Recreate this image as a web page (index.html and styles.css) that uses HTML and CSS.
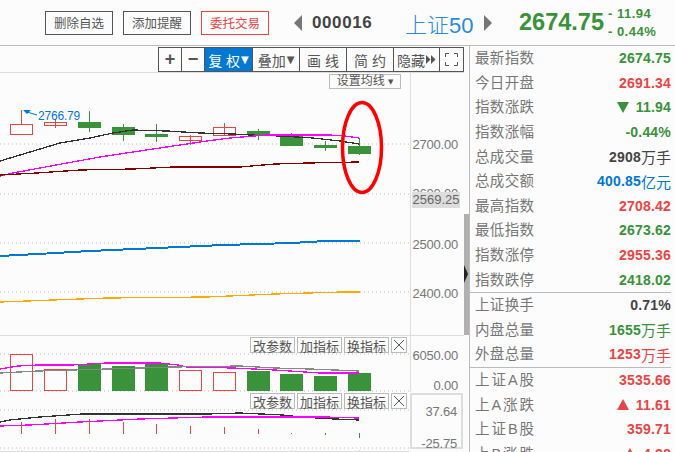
FILE: index.html
```html
<!DOCTYPE html>
<html lang="zh-CN">
<head>
    <meta charset="UTF-8">
    <meta name="viewport" content="width=device-width, initial-scale=1.0">
    <title>上证50 000016</title>
    <link rel="stylesheet" href="styles.css">
</head>
<body>
    <!-- top bar -->
    <div class="topbar">
        <button class="top-btn">删除自选</button>
        <button class="top-btn">添加提醒</button>
        <button class="top-btn top-btn-red">委托交易</button>
        <span class="arrow-left"></span>
        <span class="code">000016</span>
        <span class="name">上证50</span>
        <span class="arrow-right"></span>
        <span class="price">2674.75</span>
        <div class="change">
            <span>- 11.94</span>
            <span>- 0.44%</span>
        </div>
    </div>

    <div class="main">
        <div class="chart-col">
            <!-- toolbar -->
            <div class="toolbar">
                <div class="tool-group">
                    <button class="tool w23 tool-sign">+</button>
                    <button class="tool w23 tool-sign">−</button>
                    <button class="tool w48 tool-on">复 权 <i class="tri">▼</i></button>
                    <button class="tool w47">叠加<i class="tri">▼</i></button>
                    <button class="tool w47">画 线</button>
                    <button class="tool w47">简 约</button>
                    <button class="tool w46">隐藏<svg class="more-icon" width="10" height="9" viewBox="0 0 10 9"><polygon points="0,0 4.5,4.5 0,9" fill="#555"/><polygon points="5,0 9.5,4.5 5,9" fill="#555"/></svg></button>
                    <button class="tool w24"><svg width="13" height="13" viewBox="0 0 13 13" fill="none" stroke="#555"><path d="M.5 4V.5H4M9 .5h3.5V4M12.5 9v3.5H9M4 12.5H.5V9"/></svg></button>
                </div>
            </div>

            <!-- candles -->
            <div class="panel panel-main">
                <svg class="plot" width="410" height="262" viewBox="0 73 410 262">
                    <g class="grid">
                        <line x1="0" y1="144" x2="410" y2="144"/>
                        <line x1="0" y1="194" x2="410" y2="194"/>
                        <line x1="0" y1="243" x2="410" y2="243"/>
                        <line x1="0" y1="292" x2="410" y2="292"/>
                    </g>
                    <g class="ups">
                        <line x1="21.5" y1="110" x2="21.5" y2="124"/><rect x="10.5" y="124.5" width="22" height="10"/>
                        <line x1="55.5" y1="119" x2="55.5" y2="128"/><rect x="44.5" y="122.5" width="22" height="3"/>
                        <line x1="190.5" y1="135" x2="190.5" y2="145"/><rect x="179.5" y="136.5" width="22" height="4"/>
                        <line x1="224.5" y1="123" x2="224.5" y2="136"/><rect x="213.5" y="127.5" width="22" height="8"/>
                    </g>
                    <g class="downs">
                        <line x1="89.5" y1="111" x2="89.5" y2="132"/><rect x="78" y="122" width="23" height="6"/>
                        <line x1="123.5" y1="124" x2="123.5" y2="141"/><rect x="112" y="127" width="23" height="8"/>
                        <line x1="156.5" y1="124" x2="156.5" y2="142"/><rect x="145" y="134" width="23" height="3"/>
                        <line x1="258.5" y1="129" x2="258.5" y2="140"/><rect x="247" y="131" width="23" height="4"/>
                        <line x1="291.5" y1="133" x2="291.5" y2="146"/><rect x="280" y="135" width="23" height="11"/>
                        <line x1="325.5" y1="141" x2="325.5" y2="151"/><rect x="314" y="145" width="23" height="3"/>
                        <line x1="359.5" y1="138" x2="359.5" y2="155"/><rect x="348" y="146" width="23" height="8"/>
                    </g>
                    <g class="lines">
                        <polyline class="l-black" points="0,161 30,152 60,143 90,138 113,133 133,130 167,131 200,133 233,134 250,135 280,136 313,138 340,141 359,144"/>
                        <polyline class="l-pink" points="0,176 13,173 40,168 67,163 100,157 133,152 180,145 207,141 230,138 267,135 330,135 345,136 359,138"/>
                        <polyline class="l-maroon" points="0,175 37,173 80,170 133,169 173,167 240,167 275,164 308,163 359,162"/>
                        <polyline class="l-blue" points="0,256 38,254 90,251 157,248 223,245 292,243 325,241 360,241"/>
                        <polyline class="l-orange" points="0,302 107,298 207,297 275,294 342,292 360,292"/>
                    </g>
                    <polygon class="peak" points="23,110 31,110 27,114"/>
                    <polyline class="peak-line" points="27,112 37,115"/>
                    <text class="peak-text" x="38" y="120">2766.79</text>
                    <ellipse class="mark" cx="362" cy="147.5" rx="19.5" ry="45"/>
                </svg>
                <div class="axis">
                    <span class="tick tick-2700">2700.00</span>
                    <span class="tick tick-2600">2600.00</span>
                    <span class="tick tick-2500">2500.00</span>
                    <span class="tick tick-2400">2400.00</span>
                    <span class="tick-now">2569.25</span>
                </div>
                <button class="ma-btn">设置均线 <i class="ma-caret">▼</i></button>
            </div>

            <!-- volume -->
            <div class="panel panel-vol">
                <svg class="plot" width="410" height="56" viewBox="0 336 410 56">
                    <g class="grid">
                        <line x1="0" y1="354" x2="410" y2="354"/>
                        <line x1="0" y1="391" x2="410" y2="391"/>
                    </g>
                    <g class="ups">
                        <rect x="10.5" y="354.5" width="22" height="36"/>
                        <rect x="44.5" y="369.5" width="22" height="21"/>
                        <rect x="179.5" y="370.5" width="22" height="20"/>
                        <rect x="213.5" y="372.5" width="22" height="18"/>
                    </g>
                    <g class="downs">
                        <rect x="78" y="364" width="23" height="27"/>
                        <rect x="112" y="366" width="23" height="25"/>
                        <rect x="145" y="364" width="23" height="27"/>
                        <rect x="247" y="371" width="23" height="20"/>
                        <rect x="280" y="374" width="23" height="17"/>
                        <rect x="314" y="376" width="23" height="15"/>
                        <rect x="348" y="373" width="23" height="18"/>
                    </g>
                    <g class="lines">
                        <polyline class="l-pink" points="0,369 18,366 38,365 72,365 107,363 160,363 178,365 187,367 233,368 275,370 320,373 359,373"/>
                        <polyline class="l-gray" points="0,373 38,371 107,369 173,367 240,366 275,368 310,369 335,370 359,371"/>
                    </g>
                </svg>
                <div class="axis">
                    <span class="tick tick-6050">6050.00</span>
                    <span class="tick tick-0">0.00</span>
                </div>
                <div class="tools">
                    <button class="mini">改参数</button>
                    <button class="mini">加指标</button>
                    <button class="mini">换指标</button>
                    <button class="mini mini-x"><svg width="10" height="10" viewBox="0 0 10 10" stroke="#555"><path d="M0 0l10 10M10 0L0 10"/></svg></button>
                </div>
            </div>

            <!-- indicator -->
            <div class="panel panel-ind">
                <svg class="plot" width="410" height="60" viewBox="0 392 410 60">
                    <g class="grid">
                        <line x1="0" y1="410" x2="410" y2="410"/>
                        <line x1="0" y1="448" x2="410" y2="448"/>
                    </g>
                    <g class="lines">
                        <polyline class="l-black" points="0,422 10,420 40,417 82,414 207,414 240,413 283,415 300,417 335,419 359,420"/>
                        <polyline class="l-pink" points="0,426 30,425 80,422 140,419 207,417 235,417 325,417 359,418"/>
                    </g>
                    <g class="ind-up">
                        <line x1="21.5" y1="422" x2="21.5" y2="434"/>
                        <line x1="55.5" y1="419" x2="55.5" y2="434"/>
                        <line x1="89.5" y1="419" x2="89.5" y2="434"/>
                        <line x1="123.5" y1="422" x2="123.5" y2="434"/>
                        <line x1="156.5" y1="424" x2="156.5" y2="434"/>
                        <line x1="190.5" y1="426" x2="190.5" y2="434"/>
                        <line x1="224.5" y1="427" x2="224.5" y2="434"/>
                        <line x1="258.5" y1="429" x2="258.5" y2="434"/>
                        <line x1="291.5" y1="433" x2="291.5" y2="434"/>
                    </g>
                    <g class="ind-down">
                        <line x1="325.5" y1="433" x2="325.5" y2="435"/>
                        <line x1="359.5" y1="433" x2="359.5" y2="438"/>
                    </g>
                    <g class="base">
                        <line x1="0" y1="451.5" x2="410" y2="451.5"/>
                        <line x1="21.5" y1="450" x2="21.5" y2="452"/>
                        <line x1="89.5" y1="450" x2="89.5" y2="452"/>
                        <line x1="156.5" y1="450" x2="156.5" y2="452"/>
                        <line x1="224.5" y1="450" x2="224.5" y2="452"/>
                        <line x1="291.5" y1="450" x2="291.5" y2="452"/>
                        <line x1="359.5" y1="450" x2="359.5" y2="452"/>
                    </g>
                </svg>
                <div class="axis axis-box">
                    <span class="tick tick-37">37.64</span>
                    <span class="tick tick-25">-25.75</span>
                </div>
                <div class="tools">
                    <button class="mini">改参数</button>
                    <button class="mini">加指标</button>
                    <button class="mini">换指标</button>
                    <button class="mini mini-x"><svg width="10" height="10" viewBox="0 0 10 10" stroke="#555"><path d="M0 0l10 10M10 0L0 10"/></svg></button>
                </div>
            </div>
        </div>

        <!-- scroll handle -->
        <div class="scroll">
            <div class="thumb"></div>
            <span class="grip"></span>
        </div>

        <!-- quote list -->
        <div class="side">
            <div class="side-group">
                <div class="row"><span class="label">最新指数</span><span class="val green">2674.75</span></div>
                <div class="row"><span class="label">今日开盘</span><span class="val red">2691.34</span></div>
                <div class="row"><span class="label">指数涨跌</span><span class="val green"><i class="tri-down"></i>11.94</span></div>
                <div class="row"><span class="label">指数涨幅</span><span class="val green">-0.44%</span></div>
                <div class="row"><span class="label">总成交量</span><span class="val dark">2908<em>万手</em></span></div>
                <div class="row"><span class="label">总成交额</span><span class="val blue">400.85<em>亿元</em></span></div>
                <div class="row"><span class="label">最高指数</span><span class="val red">2708.42</span></div>
                <div class="row"><span class="label">最低指数</span><span class="val green">2673.62</span></div>
                <div class="row"><span class="label">指数涨停</span><span class="val red">2955.36</span></div>
                <div class="row"><span class="label">指数跌停</span><span class="val green">2418.02</span></div>
            </div>
            <div class="side-group">
                <div class="row"><span class="label">上证换手</span><span class="val dark">0.71%</span></div>
                <div class="row"><span class="label">内盘总量</span><span class="val green">1655<em>万手</em></span></div>
                <div class="row"><span class="label">外盘总量</span><span class="val red">1253<em>万手</em></span></div>
            </div>
            <div class="side-group side-last">
                <div class="row"><span class="label">上证A股</span><span class="val red">3535.66</span></div>
                <div class="row"><span class="label">上A涨跌</span><span class="val red"><i class="tri-up"></i>11.61</span></div>
                <div class="row"><span class="label">上证B股</span><span class="val red">359.71</span></div>
                <div class="row"><span class="label">上B涨跌</span><span class="val red"><i class="tri-up"></i>4.28</span></div>
            </div>
        </div>
    </div>
</body>
</html>
```

FILE: styles.css
```css
* {
    box-sizing: border-box;
}
html, body {
    height: 100%;
}
body {
    margin: 0;
    overflow: hidden;
    background-color: #fcfcfc;
    font-family: "Liberation Sans", "Noto Sans CJK SC", sans-serif;
    color: #555;
}
button {
    font-family: inherit;
    padding: 0;
    background: none;
    cursor: pointer;
}
i, em {
    font-style: normal;
}

/* top bar */
.topbar {
    display: flex;
    align-items: center;
    height: 46px;
    padding-left: 45px;
    border-bottom: 1px solid #bbb;
}
.top-btn {
    width: 68px;
    height: 24px;
    margin-right: 10px;
    border: 1px solid #555;
    font-size: 12.5px;
    color: #555;
}
.top-btn-red {
    border-color: #e84545;
    color: #e84545;
}
.arrow-left {
    margin-left: 15px;
    border-top: 8px solid transparent;
    border-bottom: 8px solid transparent;
    border-right: 8px solid #777;
}
.code {
    margin-left: 10px;
    width: 93px;
    font-size: 17px;
    font-weight: bold;
    letter-spacing: .6px;
    color: #444;
}
.name {
    width: 79px;
    font-size: 22px;
    font-weight: 300;
    color: #2a8ae0;
}
.arrow-right {
    border-top: 8px solid transparent;
    border-bottom: 8px solid transparent;
    border-left: 8px solid #777;
}
.price {
    margin-left: 27px;
    font-size: 23.5px;
    font-weight: bold;
    color: #3a923a;
}
.change {
    display: flex;
    flex-direction: column;
    margin-left: 4px;
    font-size: 13px;
    font-weight: bold;
    line-height: 18px;
    letter-spacing: .5px;
    color: #3a923a;
}

.main {
    display: flex;
    height: 406px;
}
.chart-col {
    width: 464px;
    flex: none;
}

/* toolbar */
.toolbar {
    display: flex;
    justify-content: flex-end;
    align-items: flex-start;
    height: 27px;
    padding-top: 1px;
    border-bottom: 1px solid #ddd;
}
.tool-group {
    display: flex;
    height: 25px;
    border: 1px solid #555;
    border-right: 0;
}
.tool {
    display: flex;
    align-items: center;
    justify-content: center;
    height: 100%;
    border: 0;
    border-right: 1px solid #555;
    font-size: 14px;
    color: #555;
}
.w23 { width: 23px; }
.w24 { width: 24px; }
.w46 { width: 46px; }
.w47 { width: 47px; }
.w48 { width: 48px; }
.tool-sign {
    font-size: 18px;
    font-weight: bold;
}
.tool-on {
    background-color: #0078d4;
    color: #fff;
}
.tri {
    margin-left: 1px;
    font-family: "DejaVu Sans", sans-serif;
    font-size: 10px;
}
.more-icon {
    margin-left: 1px;
}

/* chart panels */
.panel {
    position: relative;
    display: flex;
}
.panel-main {
    height: 263px;
    border-bottom: 1px solid #ddd;
}
.panel-vol {
    height: 56px;
}
.panel-ind {
    height: 60px;
}
.plot {
    display: block;
    flex: none;
}
.axis {
    position: relative;
    flex: 1;
    border-left: 1px solid #ddd;
}
.axis-box {
    flex: none;
    width: 53px;
    height: 56px;
    margin-top: 1px;
    border: 2px solid #ddd;
}
.tick {
    position: absolute;
    right: 6px;
    font-size: 13px;
    line-height: 14px;
    letter-spacing: -.2px;
    color: #777;
}
.tick-2700 { top: 65px; }
.tick-2600 { top: 114px; }
.tick-2500 { top: 165px; }
.tick-2400 { top: 214px; }
.tick-6050 { top: 13px; }
.tick-0 { top: 43px; }
.tick-37 { top: 10px; right: 4px; }
.tick-25 { top: 42px; right: 4px; }
.tick-now {
    position: absolute;
    top: 119px;
    left: 1px;
    width: 48px;
    height: 16px;
    background-color: #ddd;
    font-size: 13px;
    line-height: 16px;
    text-align: center;
    color: #666;
}
.ma-btn {
    position: absolute;
    top: 1px;
    left: 329px;
    width: 72px;
    height: 15px;
    border: 1px solid #bbb;
    font-size: 12px;
    line-height: 13px;
    color: #555;
}
.ma-caret {
    font-family: "DejaVu Sans", sans-serif;
    font-size: 7px;
    vertical-align: 1px;
}
.tools {
    position: absolute;
    top: 1px;
    left: 250px;
    display: flex;
    gap: 2px;
}
.mini {
    display: flex;
    align-items: center;
    justify-content: center;
    width: 45px;
    height: 16px;
    border: 1px solid #bbb;
    background-color: #fcfcfc;
    font-size: 13px;
    color: #555;
}
.mini-x {
    width: 16px;
}

/* svg chart parts */
.grid line {
    stroke: #bbb;
    stroke-dasharray: 1 3;
}
.ups rect {
    fill: none;
    stroke: #e84545;
}
.ups line {
    stroke: #e84545;
}
.downs rect {
    fill: #3a923a;
}
.downs line {
    stroke: #3a923a;
}
.lines polyline {
    fill: none;
    stroke-width: 1.3;
    shape-rendering: crispEdges;
}
.lines .l-black { stroke: #333; }
.lines .l-pink { stroke: #f0f; }
.lines .l-maroon { stroke: #800000; }
.lines .l-blue { stroke: #0078d4; stroke-width: 2; }
.lines .l-orange { stroke: #fa0; }
.lines .l-gray { stroke: #888; }
.peak {
    fill: #0078d4;
}
.peak-line {
    fill: none;
    stroke: #0078d4;
}
.peak-text {
    font-size: 12px;
    letter-spacing: -.2px;
    fill: #0078d4;
}
.mark {
    fill: none;
    stroke: #f00;
    stroke-width: 3.5;
}
.ind-up line {
    stroke: #e84545;
}
.ind-down line {
    stroke: #3a923a;
}
.base line {
    stroke: #ddd;
}

/* scroll handle */
.scroll {
    position: relative;
    flex: none;
    width: 5px;
}
.thumb {
    height: 121px;
    margin-top: 168px;
    background-color: #b0b0b0;
}
.grip {
    position: absolute;
    top: 219px;
    left: 0;
    border-top: 9px solid transparent;
    border-bottom: 9px solid transparent;
    border-left: 4px solid #222;
}

/* quote list */
.side {
    flex: 1;
    border-left: 1px solid #bbb;
    padding-right: 4px;
}
.side-group {
    border-bottom: 1px solid #bbb;
}
.side-last {
    border-bottom: 0;
}
.row {
    display: flex;
    justify-content: space-between;
    align-items: center;
    height: 24.6px;
    padding-left: 5px;
}
.label {
    width: 59px;
    margin-bottom: 3px;
    font-size: 14.5px;
    text-align: justify;
    text-align-last: justify;
    white-space: nowrap;
    color: #777;
}
.val {
    display: flex;
    align-items: center;
    font-size: 14px;
    font-weight: bold;
    letter-spacing: .2px;
}
.val em {
    font-size: 15px;
    font-weight: normal;
    letter-spacing: 0;
}
.green { color: #3a923a; }
.red { color: #e84545; }
.blue { color: #0078d4; }
.dark { color: #444; }
.tri-down {
    margin-right: 7px;
    border-left: 6px solid transparent;
    border-right: 6px solid transparent;
    border-top: 11px solid #3a923a;
}
.tri-up {
    margin-right: 7px;
    border-left: 6px solid transparent;
    border-right: 6px solid transparent;
    border-bottom: 11px solid #e84545;
}
```
